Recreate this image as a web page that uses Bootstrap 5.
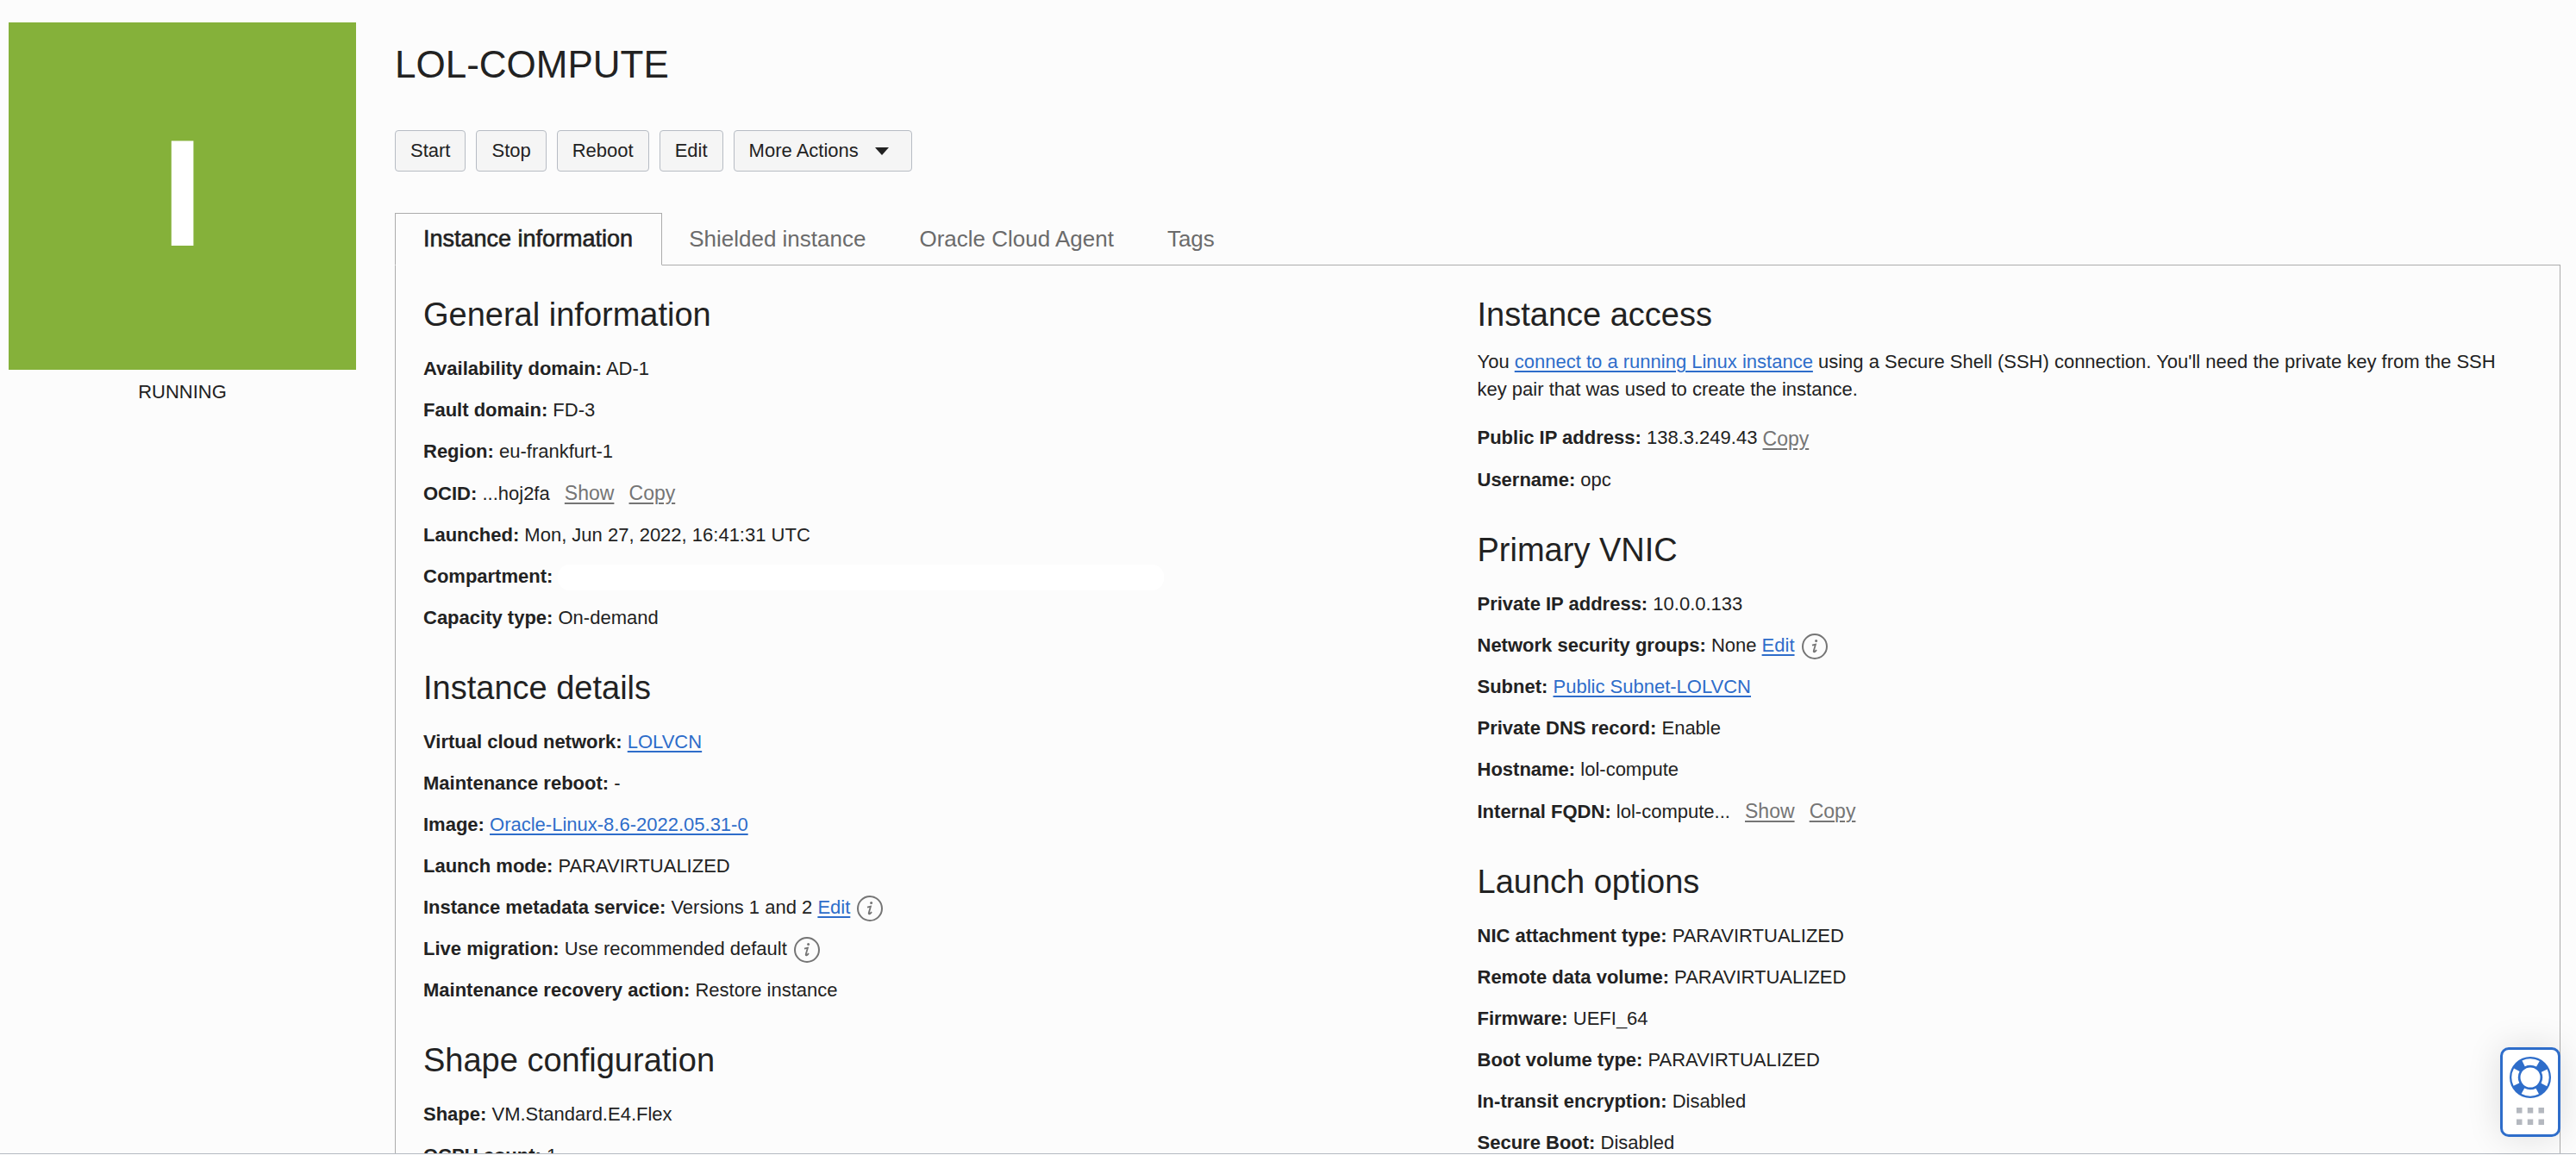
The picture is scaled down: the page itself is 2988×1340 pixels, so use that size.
<!DOCTYPE html>
<html lang="en">
<head>
<meta charset="utf-8">
<meta name="viewport" content="width=device-width, initial-scale=1">
<title>LOL-COMPUTE</title>
<link href="https://cdn.jsdelivr.net/npm/bootstrap@5.3.0/dist/css/bootstrap.min.css" rel="stylesheet">
<style>
  body { font-family: "Liberation Sans", Arial, sans-serif; font-size: 22px; line-height: 32px; color: #222; background: #fcfcfc; }
  .console-view { border-bottom: 1px solid #b7bcc4; margin-bottom: 1px; }
  .side { width: 403px; margin: 26px 45px 0 10px; }
  .state-tile { aspect-ratio: 1; background: #85b13a; color: #fff; font-size: 177px; line-height: 1; padding-bottom: 6px; }
  .state-label { margin-top: 10px; }
  .details { margin-right: 18px; padding-top: 49px; }
  h1 { font-size: 44px; line-height: 52px; font-weight: 400; margin-bottom: 50px; }
  h2 { font-size: 38px; line-height: 46px; font-weight: 400; margin: 0 0 16px; }
  .btn-oci { --bs-btn-padding-x: 17px; --bs-btn-padding-y: 7px; --bs-btn-font-size: 22px; --bs-btn-line-height: 32px; --bs-btn-border-radius: 4px;
    --bs-btn-bg: #f5f5f5; --bs-btn-border-color: #b7bcc4; --bs-btn-color: #222; --bs-btn-hover-bg: #ebebeb; --bs-btn-hover-border-color: #b7bcc4; }
  .actions { gap: 12px; margin-bottom: 48px; }
  .more { padding-right: 26px; gap: 19px; }
  .nav-oci { --bs-nav-tabs-border-color: #acacac; --bs-nav-tabs-border-radius: 0; --bs-nav-link-color: #6b6b6b; --bs-nav-link-hover-color: #222;
    --bs-nav-tabs-link-active-color: #222; --bs-nav-tabs-link-active-bg: #fcfcfc; --bs-nav-tabs-link-active-border-color: #acacac #acacac #fcfcfc; --bs-nav-link-font-weight: 400; }
  .nav-oci .nav-link { font-size: 26px; line-height: 32px; padding: 13px 30px 14px; }
  .nav-oci .nav-link.active { font-size: 27px; padding: 13px 33px 14px 32px; -webkit-text-stroke: .6px currentColor; }
  .panel { border: 1px solid #acacac; border-width: 0 1px; padding: 34px 33px 0 32px; }
  .facts { margin: 0 0 34px; line-height: 48px; }
  .intro { margin-bottom: 16px; padding-right: 16px; }
  a { color: #2e6dca; text-decoration-thickness: 2px; text-underline-offset: 3px; }
  .mini { color: #757575; font-size: 23px; }
  .mini.spaced { margin-left: 11px; }
  .mini.low { display: inline-block; vertical-align: -2px; }
  .blank { display: inline-block; width: 703px; height: 30px; border-radius: 14px; background: #fff; vertical-align: middle; }
  .info { border: 0; padding: 0; margin-left: 2px; background: none; display: inline-block; vertical-align: middle; }
  .info svg { display: block; }
  .help { right: 18px; bottom: 21px; width: 70px; height: 104px; border: 3px solid #2e6dca; border-radius: 10px; background: #fff; box-shadow: 0 0 40px rgba(0,0,0,.12); padding: 0 0 3px; gap: 11px; z-index: 5; }
</style>
</head>
<body>
<svg class="d-none" aria-hidden="true">
  <symbol id="info-mark" viewBox="0 0 30 30">
    <circle cx="15" cy="15" r="14" fill="none" stroke="#757575" stroke-width="2"/>
    <circle cx="16.6" cy="8.600" r="1.500" fill="#757575"/>
    <path d="M12 13.700q2-.6 3.900-1L13.800 20q-.5 1.900 1.100 1.100 1.200-.7 2.100-2.100" fill="none" stroke="#757575" stroke-width="1.800"/>
  </symbol>
</svg>
<div class="vh-100 d-flex flex-column overflow-hidden">
  <main class="console-view d-flex flex-fill overflow-hidden align-items-start">
    <aside class="side flex-shrink-0 text-center">
      <div class="state-tile d-flex align-items-center justify-content-center fw-bold">I</div>
      <div class="state-label">RUNNING</div>
    </aside>
    <section class="details flex-fill">
      <h1>LOL-COMPUTE</h1>
      <div class="actions d-flex">
        <button type="button" class="btn btn-oci">Start</button>
        <button type="button" class="btn btn-oci">Stop</button>
        <button type="button" class="btn btn-oci">Reboot</button>
        <button type="button" class="btn btn-oci">Edit</button>
        <button type="button" class="btn btn-oci more d-flex align-items-center">More Actions <svg width="16" height="9" viewBox="0 0 16 9" aria-hidden="true"><path d="M0 0h16L8 9z" fill="#222"/></svg></button>
      </div>
      <ul class="nav nav-tabs nav-oci">
        <li class="nav-item"><a class="nav-link active" href="#info">Instance information</a></li>
        <li class="nav-item"><a class="nav-link" href="#shielded">Shielded instance</a></li>
        <li class="nav-item"><a class="nav-link" href="#agent">Oracle Cloud Agent</a></li>
        <li class="nav-item"><a class="nav-link" href="#tags">Tags</a></li>
      </ul>
      <div class="panel" id="info">
        <div class="row g-0">
          <div class="col-6">
            <h2>General information</h2>
            <ul class="facts list-unstyled">
              <li><b>Availability domain:</b> AD-1</li>
              <li><b>Fault domain:</b> FD-3</li>
              <li><b>Region:</b> eu-frankfurt-1</li>
              <li><b>OCID:</b> ...hoj2fa <a class="mini spaced" href="#show">Show</a> <a class="mini spaced" href="#copy">Copy</a></li>
              <li><b>Launched:</b> Mon, Jun 27, 2022, 16:41:31 UTC</li>
              <li><b>Compartment:</b> <span class="blank"></span></li>
              <li><b>Capacity type:</b> On-demand</li>
            </ul>
            <h2>Instance details</h2>
            <ul class="facts list-unstyled">
              <li><b>Virtual cloud network:</b> <a href="#vcn">LOLVCN</a></li>
              <li><b>Maintenance reboot:</b> -</li>
              <li><b>Image:</b> <a href="#image">Oracle-Linux-8.6-2022.05.31-0</a></li>
              <li><b>Launch mode:</b> PARAVIRTUALIZED</li>
              <li><b>Instance metadata service:</b> Versions 1 and 2 <a href="#edit">Edit</a> <button type="button" class="info" aria-label="About the metadata service"><svg width="30" height="30"><use href="#info-mark"/></svg></button></li>
              <li><b>Live migration:</b> Use recommended default <button type="button" class="info" aria-label="About live migration"><svg width="30" height="30"><use href="#info-mark"/></svg></button></li>
              <li><b>Maintenance recovery action:</b> Restore instance</li>
            </ul>
            <h2>Shape configuration</h2>
            <ul class="facts list-unstyled">
              <li><b>Shape:</b> VM.Standard.E4.Flex</li>
              <li><b>OCPU count:</b> 1</li>
            </ul>
          </div>
          <div class="col-6">
            <h2>Instance access</h2>
            <p class="intro">You <a href="#connect">connect to a running Linux instance</a> using a Secure Shell (SSH) connection. You'll need the private key from the SSH key pair that was used to create the instance.</p>
            <ul class="facts list-unstyled">
              <li><b>Public IP address:</b> 138.3.249.43 <a class="mini low" href="#copy-ip">Copy</a></li>
              <li><b>Username:</b> opc</li>
            </ul>
            <h2>Primary VNIC</h2>
            <ul class="facts list-unstyled">
              <li><b>Private IP address:</b> 10.0.0.133</li>
              <li><b>Network security groups:</b> None <a href="#nsg">Edit</a> <button type="button" class="info" aria-label="About network security groups"><svg width="30" height="30"><use href="#info-mark"/></svg></button></li>
              <li><b>Subnet:</b> <a href="#subnet">Public Subnet-LOLVCN</a></li>
              <li><b>Private DNS record:</b> Enable</li>
              <li><b>Hostname:</b> lol-compute</li>
              <li><b>Internal FQDN:</b> lol-compute... <a class="mini spaced" href="#show-fqdn">Show</a> <a class="mini spaced" href="#copy-fqdn">Copy</a></li>
            </ul>
            <h2>Launch options</h2>
            <ul class="facts list-unstyled">
              <li><b>NIC attachment type:</b> PARAVIRTUALIZED</li>
              <li><b>Remote data volume:</b> PARAVIRTUALIZED</li>
              <li><b>Firmware:</b> UEFI_64</li>
              <li><b>Boot volume type:</b> PARAVIRTUALIZED</li>
              <li><b>In-transit encryption:</b> Disabled</li>
              <li><b>Secure Boot:</b> Disabled</li>
            </ul>
          </div>
        </div>
      </div>
    </section>
  </main>
</div>
<button type="button" class="help position-fixed d-flex flex-column align-items-center justify-content-center" aria-label="Help">
  <svg width="48" height="48" viewBox="0 0 48 48" aria-hidden="true">
    <circle cx="24" cy="24" r="24" fill="#2e6dca"/>
    <circle cx="24" cy="24" r="18" fill="none" stroke="#fff" stroke-width="7.500" stroke-dasharray="17.500 10.774" stroke-dashoffset="8.750"/>
    <circle cx="24" cy="24" r="11.500" fill="#fff"/>
  </svg>
  <svg width="32" height="20" viewBox="0 0 32 20" fill="#b4b8bf" aria-hidden="true">
    <path d="M0 0h6.500v6.500H0zM12.750 0h6.500v6.500h-6.500zM25.500 0H32v6.500h-6.500zM0 13.500h6.500V20H0zM12.750 13.500h6.500V20h-6.500zM25.500 13.500H32V20h-6.500z"/>
  </svg>
</button>
<script src="https://cdn.jsdelivr.net/npm/bootstrap@5.3.0/dist/js/bootstrap.bundle.min.js"></script>
</body>
</html>
